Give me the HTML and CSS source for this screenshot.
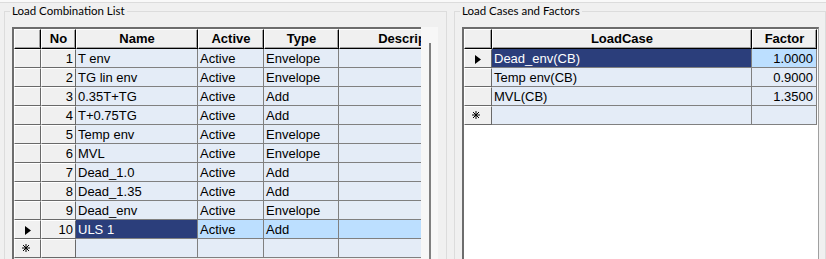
FILE: index.html
```html
<!DOCTYPE html>
<html lang="en">

<head>
    <meta charset="UTF-8">
    <title>Load Combinations</title>
    <link rel="stylesheet" href="styles.css">
</head>

<body>

    <div class="topline"></div>

    <div class="panels">

        <fieldset class="group group-left">
            <legend>Load Combination List</legend>

            <div class="grid-frame">
                <div class="grid-clip">
                    <div class="grid combos">
                        <div class="row head">
                            <div class="hc"></div>
                            <div class="hc">No</div>
                            <div class="hc">Name</div>
                            <div class="hc">Active</div>
                            <div class="hc">Type</div>
                            <div class="hc">Description</div>
                        </div>

                        <div class="row">
                            <div class="rh"></div>
                            <div class="num">1</div>
                            <div class="c">T env</div>
                            <div class="c">Active</div>
                            <div class="c">Envelope</div>
                            <div class="c"></div>
                        </div>
                        <div class="row">
                            <div class="rh"></div>
                            <div class="num">2</div>
                            <div class="c">TG lin env</div>
                            <div class="c">Active</div>
                            <div class="c">Envelope</div>
                            <div class="c"></div>
                        </div>
                        <div class="row">
                            <div class="rh"></div>
                            <div class="num">3</div>
                            <div class="c">0.35T+TG</div>
                            <div class="c">Active</div>
                            <div class="c">Add</div>
                            <div class="c"></div>
                        </div>
                        <div class="row">
                            <div class="rh"></div>
                            <div class="num">4</div>
                            <div class="c">T+0.75TG</div>
                            <div class="c">Active</div>
                            <div class="c">Add</div>
                            <div class="c"></div>
                        </div>
                        <div class="row">
                            <div class="rh"></div>
                            <div class="num">5</div>
                            <div class="c">Temp env</div>
                            <div class="c">Active</div>
                            <div class="c">Envelope</div>
                            <div class="c"></div>
                        </div>
                        <div class="row">
                            <div class="rh"></div>
                            <div class="num">6</div>
                            <div class="c">MVL</div>
                            <div class="c">Active</div>
                            <div class="c">Envelope</div>
                            <div class="c"></div>
                        </div>
                        <div class="row">
                            <div class="rh"></div>
                            <div class="num">7</div>
                            <div class="c">Dead_1.0</div>
                            <div class="c">Active</div>
                            <div class="c">Add</div>
                            <div class="c"></div>
                        </div>
                        <div class="row">
                            <div class="rh"></div>
                            <div class="num">8</div>
                            <div class="c">Dead_1.35</div>
                            <div class="c">Active</div>
                            <div class="c">Add</div>
                            <div class="c"></div>
                        </div>
                        <div class="row">
                            <div class="rh"></div>
                            <div class="num">9</div>
                            <div class="c">Dead_env</div>
                            <div class="c">Active</div>
                            <div class="c">Envelope</div>
                            <div class="c"></div>
                        </div>
                        <div class="row sel">
                            <div class="rh">
                                <svg class="arrow" width="6" height="9" viewBox="0 0 6 9"><polygon points="0,0 6,4.5 0,9" fill="#000"/></svg>
                            </div>
                            <div class="num">10</div>
                            <div class="c cur">ULS 1</div>
                            <div class="c">Active</div>
                            <div class="c">Add</div>
                            <div class="c"></div>
                        </div>
                        <div class="row">
                            <div class="rh">
                                <svg class="star" width="8" height="8" viewBox="0 0 8 8"><path d="M4 0V8M0 4H8M1 1L7 7M7 1L1 7" stroke="#000" stroke-width="1"/></svg>
                            </div>
                            <div class="num"></div>
                            <div class="c"></div>
                            <div class="c"></div>
                            <div class="c"></div>
                            <div class="c"></div>
                        </div>
                    </div>
                </div>
                <div class="vscroll"><div class="vscroll-line"></div></div>
            </div>
        </fieldset>

        <fieldset class="group group-right">
            <legend>Load Cases and Factors</legend>

            <div class="grid factors">
                <div class="row head">
                    <div class="hc"></div>
                    <div class="hc">LoadCase</div>
                    <div class="hc">Factor</div>
                </div>
                <div class="row sel">
                    <div class="rh">
                        <svg class="arrow" width="6" height="9" viewBox="0 0 6 9"><polygon points="0,0 6,4.5 0,9" fill="#000"/></svg>
                    </div>
                    <div class="c cur">Dead_env(CB)</div>
                    <div class="c right">1.0000</div>
                </div>
                <div class="row">
                    <div class="rh"></div>
                    <div class="c">Temp env(CB)</div>
                    <div class="c right">0.9000</div>
                </div>
                <div class="row">
                    <div class="rh"></div>
                    <div class="c">MVL(CB)</div>
                    <div class="c right">1.3500</div>
                </div>
                <div class="row">
                    <div class="rh">
                        <svg class="star" width="8" height="8" viewBox="0 0 8 8"><path d="M4 0V8M0 4H8M1 1L7 7M7 1L1 7" stroke="#000" stroke-width="1"/></svg>
                    </div>
                    <div class="c"></div>
                    <div class="c"></div>
                </div>
            </div>
        </fieldset>

    </div>

</body>

</html>
```

FILE: styles.css
```css
html,
body {
    margin: 0;
    height: 259px;
    overflow: hidden;
}

body {
    background: #f0f0f0;
    font-family: "Liberation Sans", Arial, sans-serif;
    font-size: 13px;
    color: #000;
}

.topline {
    height: 2px;
    background: #f9f9f9;
    border-bottom: 1px solid #dcdcdc;
}

.panels {
    display: flex;
    margin-top: 1px;
}

.group {
    margin: 0;
    padding: 9px 0 0 7px;
    border: 1px solid #dcdcdc;
    height: 300px;
    box-sizing: border-box;
    min-width: 0;
}

.group legend {
    font-family: Lato, "Liberation Sans", sans-serif;
    font-size: 11.5px;
    line-height: 14px;
    padding: 0 2px;
    margin-left: -2px;
}

.group-left {
    margin-left: 4px;
    width: 443px;
}

.group-right {
    margin-left: 7px;
    flex: 1;
}

/* left grid: clipped columns and a scrollbar strip */
.grid-frame {
    display: flex;
    width: 426px;
    height: 300px;
}

.grid-clip {
    width: 409px;
    overflow: hidden;
    border-left: 2px solid #6d6d6d;
    border-top: 2px solid #6d6d6d;
    box-sizing: border-box;
}

.vscroll {
    width: 17px;
    background: #f7f7f7;
    padding-top: 16px;
    box-sizing: border-box;
}

.vscroll-line {
    margin-left: 8px;
    height: 100%;
    border-left: 2px solid #808080;
}

.row {
    display: grid;
}

.combos .row {
    grid-template-columns: 27px 35px 122px 66px 75px 150px;
}

.factors {
    width: 357px;
    height: 300px;
    background: #fff;
    border-left: 2px solid #6d6d6d;
    border-top: 2px solid #6d6d6d;
    border-right: 1px solid #a0a0a0;
    box-sizing: border-box;
}

.factors .row {
    grid-template-columns: 28px 260px 65px;
}

/* header cells */
.hc {
    height: 20px;
    box-sizing: border-box;
    background: #f0f0f0;
    border-top: 1px solid #fff;
    border-left: 1px solid #fff;
    border-right: 1px solid #000;
    border-bottom: 1px solid #000;
    box-shadow: inset -1px -1px 0 #a0a0a0;
    font-weight: bold;
    text-align: center;
    line-height: 17px;
    white-space: nowrap;
    overflow: hidden;
}

/* row headers */
.rh,
.num {
    height: 19px;
    box-sizing: border-box;
    background: #f0f0f0;
    border-top: 1px solid #fff;
    border-left: 1px solid #fff;
    border-right: 1px solid #696969;
    border-bottom: 1px solid #696969;
}

.rh {
    padding: 4px 0 0 7px;
}

.rh .arrow {
    display: block;
    margin: 0 0 0 3px;
    padding-top: 1px;
}

.rh .star {
    display: block;
}

.num {
    text-align: right;
    padding: 1px 2px 0 0;
    line-height: 16px;
}

/* data cells */
.c {
    height: 19px;
    box-sizing: border-box;
    background: #e4ecf7;
    border-right: 1px solid #808080;
    border-bottom: 1px solid #808080;
    padding: 2px 3px 0 2px;
    line-height: 16px;
    white-space: nowrap;
    overflow: hidden;
}

.c.right {
    text-align: right;
}

.sel .c {
    background: #bcdfff;
}

.sel .c.cur {
    background: #2b3e7b;
    color: #fff;
}
```
